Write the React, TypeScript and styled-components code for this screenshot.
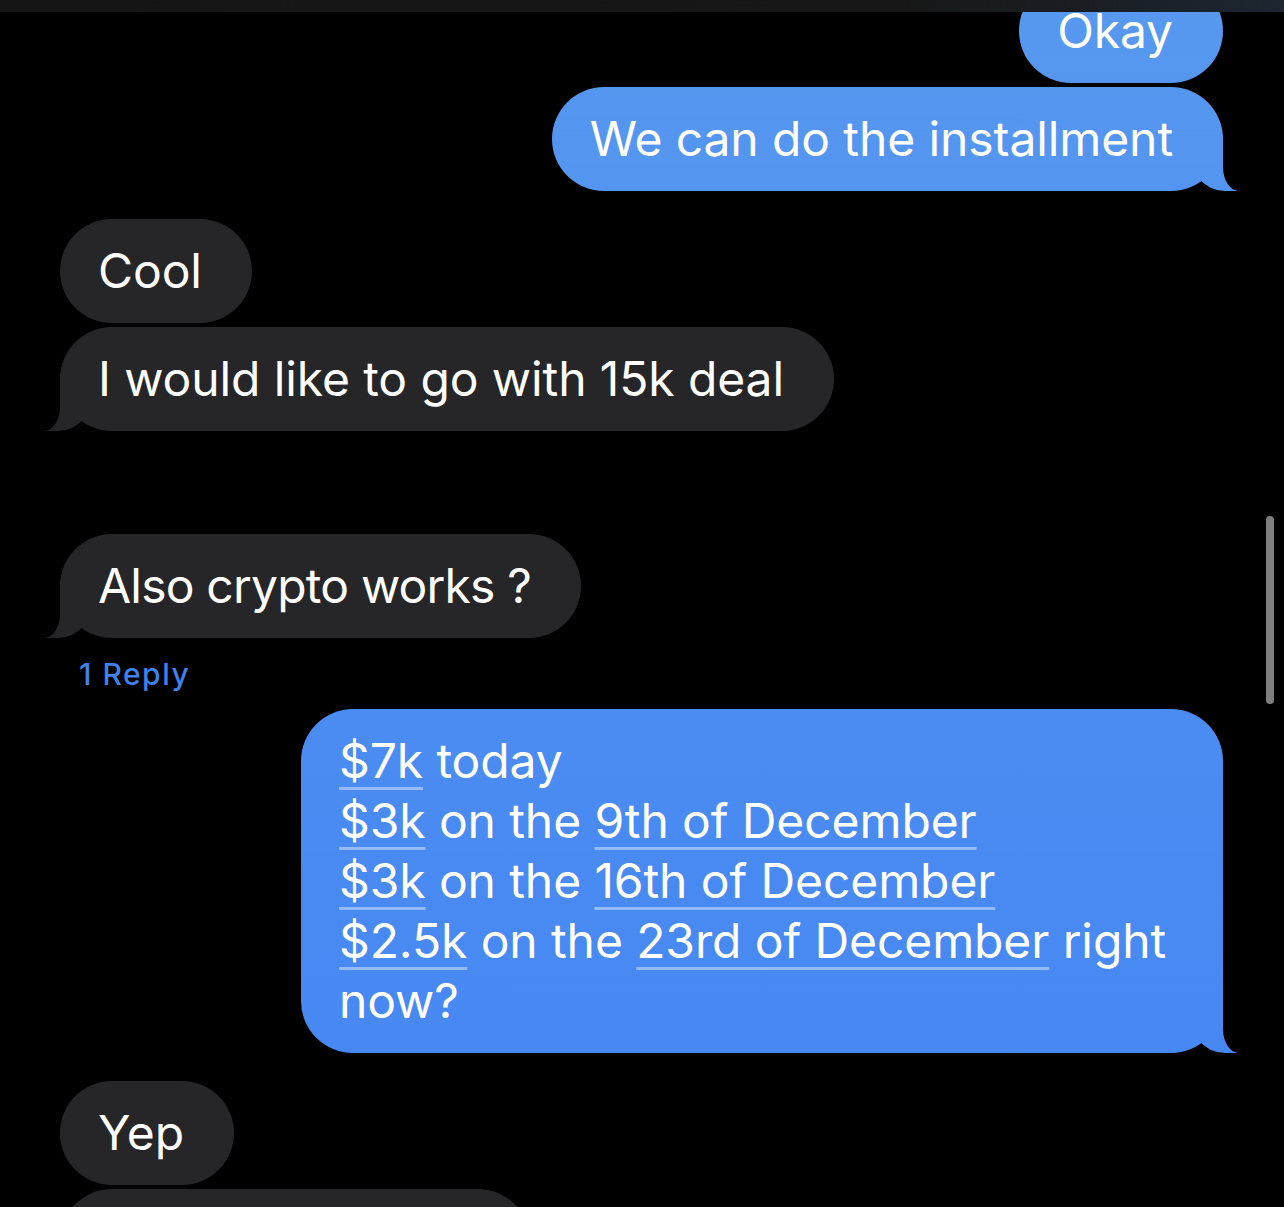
import React from 'react';
import styled, { createGlobalStyle, css } from 'styled-components';

const GlobalStyle = createGlobalStyle`
	html, body {
		margin: 0;
		padding: 0;
		background: #000;
	}
	body {
		font-family: Inter, "Noto Sans", "Liberation Sans", sans-serif;
		-webkit-font-smoothing: antialiased;
	}
`;

const BLUE = 'linear-gradient(180deg, #5799ef 0px, #4e90f0 400px, #4586f3 1207px)';
const GREY = '#262629';

const Screen = styled.div`
	position: relative;
	width: 1284px;
	height: 1207px;
	display: flex;
	flex-direction: column;
	background: #000;
	overflow: hidden;
`;

const StatusStrip = styled.div`
	flex: 0 0 12px;
	background: linear-gradient(90deg, #151515 0%, #171717 70%, #1d2631 100%);
	position: relative;
	z-index: 2;
`;

const Thread = styled.div`
	flex: 1;
	display: flex;
	flex-direction: column;
	padding: 0 61px 0 60px;
	margin-top: -33px;
`;

const tailMe = css`
	&::before {
		content: '';
		position: absolute;
		bottom: 0;
		right: -15px;
		width: 51px;
		height: 56px;
		background: inherit;
		background-attachment: fixed;
		border-bottom-left-radius: 38px 44px;
	}
	&::after {
		content: '';
		position: absolute;
		bottom: 0;
		right: -44px;
		width: 44px;
		height: 62px;
		background: #000;
		border-bottom-left-radius: 16px 24px;
	}
`;

const tailThem = css`
	&::before {
		content: '';
		position: absolute;
		bottom: 0;
		left: -16px;
		width: 52px;
		height: 56px;
		background: ${GREY};
		border-bottom-right-radius: 38px 44px;
	}
	&::after {
		content: '';
		position: absolute;
		bottom: 0;
		left: -44px;
		width: 44px;
		height: 62px;
		background: #000;
		border-bottom-right-radius: 16px 24px;
	}
`;

const Bubble = styled.div<{ $me?: boolean; $tail?: boolean; $gap?: number }>`
	position: relative;
	align-self: ${({ $me }) => ($me ? 'flex-end' : 'flex-start')};
	margin-top: ${({ $gap }) => $gap ?? 4}px;
	max-width: 834px;
	padding: 22px 50px 22px 38px;
	border-radius: 52px;
	font-size: 48px;
	line-height: 60px;
	letter-spacing: -0.1px;
	color: #fff;
	background: ${({ $me }) => ($me ? BLUE : GREY)};
	background-attachment: fixed;
	${({ $tail, $me }) => $tail && ($me ? tailMe : tailThem)}
`;

const Tight = styled.span`
	letter-spacing: -0.8px;
`;

const Peek = styled(Bubble)`
	width: 470px;
	height: 104px;
	box-sizing: border-box;
`;

const Link = styled.span`
	text-decoration: underline;
	text-decoration-color: rgba(255, 255, 255, 0.42);
	text-decoration-thickness: 3px;
	text-underline-offset: 9px;
`;

const Reply = styled.div`
	margin: 18px 0 17px 19px;
	font-size: 30px;
	line-height: 36px;
	font-weight: 500;
	color: #3e82ec;
	letter-spacing: 1.5px;
`;

const ScrollThumb = styled.div`
	position: absolute;
	top: 516px;
	left: 1266px;
	width: 8px;
	height: 188px;
	border-radius: 4px;
	background: #7e7e7e;
`;

export default function App() {
	return (
		<>
			<GlobalStyle/>
			<Screen>
				<StatusStrip/>
				<Thread>
					<Bubble $me $gap={0}>Okay</Bubble>
					<Bubble $me $tail>We can do the installment</Bubble>

					<Bubble $gap={28}>Cool</Bubble>
					<Bubble $tail>I would like to go with 15k deal</Bubble>

					<Bubble $tail $gap={103}><Tight>Also crypto works ?</Tight></Bubble>
					<Reply>1 Reply</Reply>

					<Bubble $me $tail $gap={0}>
						<Link>$7k</Link> today<br/>
						<Link>$3k</Link> on the <Link>9th of December</Link><br/>
						<Link>$3k</Link> on the <Link>16th of December</Link><br/>
						<Link>$2.5k</Link> on the <Link>23rd of December</Link> right now?
					</Bubble>

					<Bubble $gap={28}>Yep</Bubble>
					<Peek>&nbsp;</Peek>
				</Thread>
				<ScrollThumb/>
			</Screen>
		</>
	);
}
